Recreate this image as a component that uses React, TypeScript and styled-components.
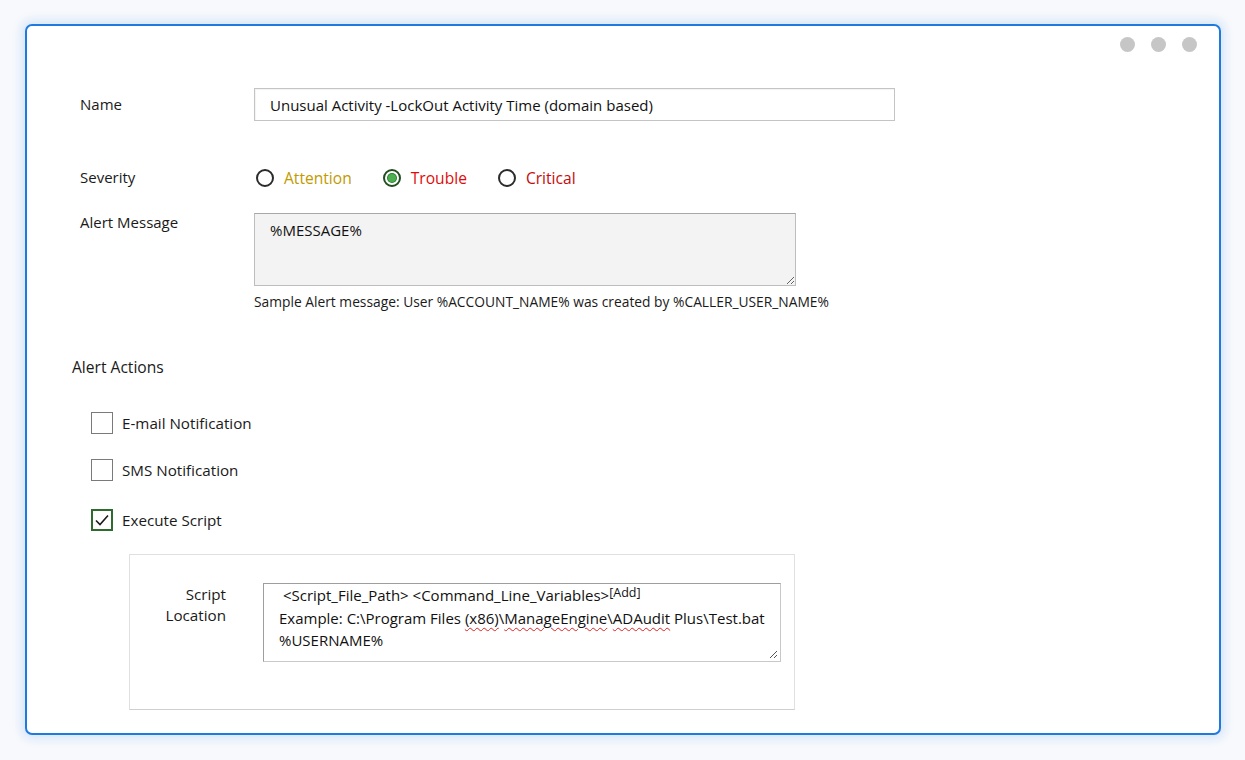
import styled, { createGlobalStyle } from "styled-components";

const GlobalStyle = createGlobalStyle`
  html, body {
    margin: 0;
    padding: 0;
    background: #f7f9fc;
  }
  body {
    font-family: "Open Sans", "Noto Sans", sans-serif;
    color: #1a1a1a;
  }
`

const Page = styled.div`
  padding: 24px 24px 25px 25px;
`

const Card = styled.div`
  width: 1196px;
  height: 711px;
  box-sizing: border-box;
  background: #fff;
  border: 2px solid #1f7ae0;
  border-radius: 7px;
  box-shadow: 0 0 10px 4px rgba(31, 122, 224, 0.14);
  display: flex;
  flex-direction: column;
`

const TopBar = styled.div`
  display: flex;
  justify-content: flex-end;
  gap: 16px;
  padding: 11px 22px 0 0;
`

const Dot = styled.span`
  width: 15px;
  height: 15px;
  border-radius: 50%;
  background: #c6c6c6;
`

const Form = styled.div`
  padding-left: 53px;
  font-size: 15px;
  line-height: 20px;
`

const Row = styled.div<{ $top: number; $align?: string }>`
  display: grid;
  grid-template-columns: 174px 1fr;
  align-items: ${p => p.$align || "center"};
  margin-top: ${p => p.$top}px;
`

const Label = styled.div<{ $pad?: number }>`
  color: #1a1a1a;
  padding-top: ${p => p.$pad || 0}px;
  margin-top: -2px;
`

const TextInput = styled.input`
  width: 641px;
  height: 33px;
  box-sizing: border-box;
  border: 1px solid #c4c4c4;
  box-shadow: inset 1px 1px 1px rgba(0, 0, 0, 0.05);
  padding: 0 15px;
  font-family: "Open Sans", sans-serif;
  font-size: 15px;
  color: #111;
  outline: none;
`

const Radios = styled.div`
  display: flex;
  align-items: center;
  gap: 31px;
  margin-left: 2px;
  height: 22px;
`

const RadioItem = styled.label`
  display: flex;
  align-items: center;
  gap: 10px;
`

const RadioCircle = styled.span<{ $on?: boolean }>`
  width: 18px;
  height: 18px;
  box-sizing: border-box;
  border-radius: 50%;
  border: 2px solid ${p => (p.$on ? "#1f4d1f" : "#2b2b2b")};
  display: flex;
  align-items: center;
  justify-content: center;
  &::after {
    content: "";
    display: ${p => (p.$on ? "block" : "none")};
    width: 8px;
    height: 8px;
    border-radius: 50%;
    background: #4caf50;
    box-shadow: 0 0 0 1px #2e7d32;
  }
`

const RadioText = styled.span<{ $color: string }>`
  color: ${p => p.$color};
  font-size: 15.6px;
  margin-top: -1px;
`

const MessageArea = styled.textarea`
  display: block;
  width: 542px;
  height: 73px;
  box-sizing: border-box;
  background: #f3f3f3;
  border: 1px solid #bdbdbd;
  border-top-color: #a8a8a8;
  padding: 6px 15px;
  font-family: "Open Sans", sans-serif;
  font-size: 15px;
  color: #111;
  outline: none;
`

const Hint = styled.div`
  margin: 7px 0 0 174px;
  font-size: 13.8px;
  line-height: 18px;
  color: #1a1a1a;
`

const SectionTitle = styled.div`
  margin: 46px 0 0 -8px;
  font-size: 15.6px;
  color: #1a1a1a;
`

const Actions = styled.div`
  margin: 35px 0 0 11px;
  display: flex;
  flex-direction: column;
  gap: 25px;
`

const CheckRow = styled.label`
  display: flex;
  align-items: center;
  gap: 9px;
  height: 22px;
  font-size: 15.2px;
  &:nth-child(3) {
    margin-top: 3px;
  }
`

const Box = styled.span<{ $on?: boolean }>`
  width: 22px;
  height: 22px;
  box-sizing: border-box;
  border: 1px solid ${p => (p.$on ? "#2f6b2f" : "#7a7a7a")};
  border-width: ${p => (p.$on ? "2px" : "1px")};
  display: flex;
  align-items: center;
  justify-content: center;
`

const ScriptPanel = styled.div`
  margin: 23px 0 0 49px;
  width: 666px;
  height: 156px;
  box-sizing: border-box;
  border: 1px solid #e0e0e0;
  border-bottom-color: #cfcfcf;
  display: grid;
  grid-template-columns: 96px 518px;
  column-gap: 37px;
  align-items: start;
  padding-top: 28px;
`

const ScriptLabel = styled.div`
  text-align: right;
  font-size: 15.2px;
  line-height: 21px;
  margin-top: 1px;
`

const ScriptArea = styled.div`
  position: relative;
  height: 79px;
  box-sizing: border-box;
  border: 1px solid #9e9e9e;
  border-right-color: #c8c8c8;
  border-bottom-color: #c8c8c8;
  padding: 0 4px 0 15px;
  font-size: 15px;
  line-height: 22.5px;
  color: #111;
  white-space: nowrap;
  overflow: hidden;
`

const Sup = styled.sup`
  font-size: 12.5px;
  vertical-align: 4px;
  line-height: 0;
`

const Typo = styled.span`
  text-decoration: underline wavy #e02020;
  text-decoration-thickness: 1px;
  text-underline-offset: 3px;
`

const Grip = styled.svg`
  position: absolute;
  right: 2px;
  bottom: 2px;
`

function Check() {
  return (
    <svg width="16" height="14" viewBox="0 0 16 14">
      <path d="M2 7.5 L6 11.5 L14 2.5" fill="none" stroke="#1a1a1a" strokeWidth="1.6" />
    </svg>
  )
}

export default function App() {
  return (
    <>
      <GlobalStyle />
      <Page>
        <Card>
          <TopBar>
            <Dot />
            <Dot />
            <Dot />
          </TopBar>
          <Form>
            <Row $top={36}>
              <Label>Name</Label>
              <TextInput readOnly value="Unusual Activity -LockOut Activity Time (domain based)" />
            </Row>

            <Row $top={46}>
              <Label>Severity</Label>
              <Radios>
                <RadioItem>
                  <RadioCircle />
                  <RadioText $color="#c19a00">Attention</RadioText>
                </RadioItem>
                <RadioItem>
                  <RadioCircle $on />
                  <RadioText $color="#e00b0b">Trouble</RadioText>
                </RadioItem>
                <RadioItem>
                  <RadioCircle />
                  <RadioText $color="#c40c0c">Critical</RadioText>
                </RadioItem>
              </Radios>
            </Row>

            <Row $top={24} $align="start">
              <Label $pad={1}>Alert Message</Label>
              <MessageArea readOnly value="%MESSAGE%" />
            </Row>
            <Hint>Sample Alert message: User %ACCOUNT_NAME% was created by %CALLER_USER_NAME%</Hint>

            <SectionTitle>Alert Actions</SectionTitle>

            <Actions>
              <CheckRow>
                <Box />
                E-mail Notification
              </CheckRow>
              <CheckRow>
                <Box />
                SMS Notification
              </CheckRow>
              <CheckRow>
                <Box $on>
                  <Check />
                </Box>
                Execute Script
              </CheckRow>
            </Actions>

            <ScriptPanel>
              <ScriptLabel>
                Script
                <br />
                Location
              </ScriptLabel>
              <ScriptArea>
                <div>&nbsp;&lt;Script_File_Path&gt; &lt;Command_Line_Variables&gt;<Sup>[Add]</Sup></div>
                <div>
                  Example: C:\Program Files <Typo>(x86)</Typo>\<Typo>ManageEngine</Typo>\<Typo>ADAudit</Typo> Plus\Test.bat
                </div>
                <div>%USERNAME%</div>
                <Grip width="10" height="10" viewBox="0 0 10 10">
                  <path d="M9 2 L2 9 M9 6 L6 9" stroke="#555" strokeWidth="1" />
                </Grip>
              </ScriptArea>
            </ScriptPanel>
          </Form>
        </Card>
      </Page>
    </>
  )
}
